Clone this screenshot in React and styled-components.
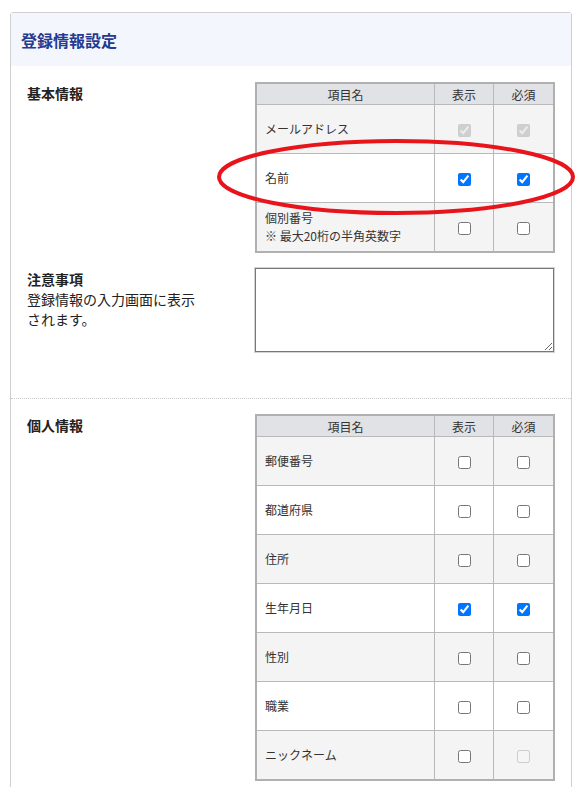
import React from 'react';
import styled, { createGlobalStyle } from 'styled-components';

const GlobalStyle = createGlobalStyle`
  body {
    margin: 0;
    background: #fff;
    font-family: "Noto Sans CJK JP", "Noto Sans", sans-serif;
    color: #222;
  }
`;

const Page = styled.div`
  position: relative;
  padding: 12px 7px 40px 10px;
`;

const Card = styled.div`
  border: 1px solid #cfcfcf;
  border-radius: 3px;
  background: #fff;
`;

const CardHeader = styled.div`
  background: #f3f6fd;
  height: 53px;
  display: flex;
  align-items: center;
  padding: 0 10px;
`;

const Title = styled.h2`
  margin: 0;
  font-size: 16px;
  font-weight: 700;
  color: #263a8f;
`;

const Section = styled.div`
  padding: ${p => p.$last ? '15px 16px 20px' : '16px 16px 41px'};
  border-bottom: ${p => p.$last ? 'none' : '1px dotted #c8c8c8'};
  display: flex;
  flex-direction: column;
  gap: 15px;
`;

const Row = styled.div`
  display: grid;
  grid-template-columns: 1fr 300px;
`;

const Label = styled.div`
  font-size: 14px;
  font-weight: 700;
  line-height: 20px;
  padding-top: 1px;
`;

const Note = styled.div`
  font-size: 14px;
  font-weight: 400;
  line-height: 20px;
  width: 172px;
`;

const Table = styled.table`
  width: 300px;
  border-collapse: collapse;
  border: 2px solid #b0b0b0;
  font-size: 12px;
  color: #333;
`;

const Th = styled.th`
  background: #e1e2e5;
  font-weight: 400;
  height: 20px;
  padding: 0;
  border: 1px solid #b9b9b9;
  text-align: center;
  width: ${p => p.$w || 'auto'};
`;

const Tr = styled.tr`
  background: ${p => p.$alt ? '#f4f4f4' : '#fff'};
`;

const Td = styled.td`
  height: 48px;
  padding: 0 8px;
  border: 1px solid #b9b9b9;
  text-align: ${p => p.$center ? 'center' : 'left'};
  line-height: 18px;
`;

const Check = styled.input.attrs({ type: 'checkbox' })`
  width: 13px;
  height: 13px;
  margin: 0;
  vertical-align: middle;
  accent-color: #0075ff;
`;

const TextArea = styled.textarea`
  width: 299px;
  height: 84px;
  box-sizing: border-box;
  border: 1px solid #777;
  box-shadow: 0 0 0 1px #d4d4d4;
  resize: vertical;
  font-family: inherit;
`;

const Ellipse = styled.svg`
  position: absolute;
  left: 215px;
  top: 136px;
  pointer-events: none;
`;

const basic = [
  { name: 'メールアドレス', show: 'locked', req: 'locked' },
  { name: '名前', show: 'on', req: 'on' },
  { name: '個別番号', sub: '※ 最大20桁の半角英数字', show: 'off', req: 'off' },
];

const personal = [
  { name: '郵便番号', show: 'off', req: 'off' },
  { name: '都道府県', show: 'off', req: 'off' },
  { name: '住所', show: 'off', req: 'off' },
  { name: '生年月日', show: 'on', req: 'on' },
  { name: '性別', show: 'off', req: 'off' },
  { name: '職業', show: 'off', req: 'off' },
  { name: 'ニックネーム', show: 'off', req: 'disabled' },
];

function Box({ state }) {
  if (state === 'locked') return <Check defaultChecked disabled />;
  if (state === 'disabled') return <Check disabled />;
  return <Check defaultChecked={state === 'on'} />;
}

function FieldTable({ rows }) {
  return (
    <Table>
      <thead>
        <tr>
          <Th>項目名</Th>
          <Th $w="58px">表示</Th>
          <Th $w="59px">必須</Th>
        </tr>
      </thead>
      <tbody>
        {rows.map((r, i) => (
          <Tr key={r.name} $alt={i % 2 === 0}>
            <Td>
              {r.name}
              {r.sub && <><br />{r.sub}</>}
            </Td>
            <Td $center><Box state={r.show} /></Td>
            <Td $center><Box state={r.req} /></Td>
          </Tr>
        ))}
      </tbody>
    </Table>
  );
}

export default function App() {
  return (
    <Page>
      <GlobalStyle />
      <Card>
        <CardHeader>
          <Title>登録情報設定</Title>
        </CardHeader>
        <Section>
          <Row>
            <Label>基本情報</Label>
            <FieldTable rows={basic} />
          </Row>
          <Row>
            <Label>
              注意事項
              <Note>登録情報の入力画面に表示されます。</Note>
            </Label>
            <div><TextArea /></div>
          </Row>
        </Section>
        <Section $last>
          <Row>
            <Label>個人情報</Label>
            <FieldTable rows={personal} />
          </Row>
        </Section>
      </Card>
      <Ellipse width="362" height="82" viewBox="0 0 362 82">
        <ellipse cx="181" cy="41" rx="177" ry="36" fill="none" stroke="#e8141c" strokeWidth="4" />
      </Ellipse>
    </Page>
  );
}
